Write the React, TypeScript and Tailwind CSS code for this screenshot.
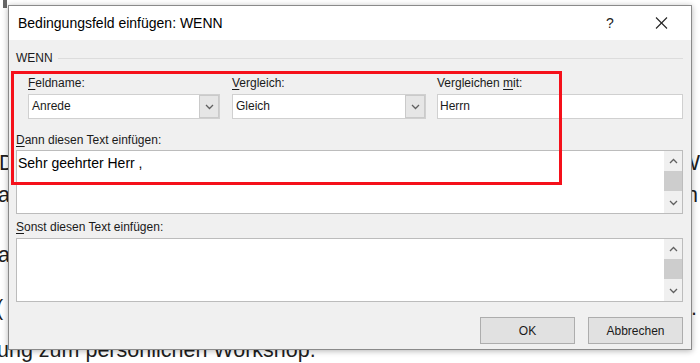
import React from 'react';

const Chevron: React.FC<{ up?: boolean; className?: string }> = ({ up, className }) => (
  <svg width="9" height="6" viewBox="0 0 9 6" className={className}>
    <polyline
      points={up ? '1,5 4.5,1.5 8,5' : '1,1 4.5,4.5 8,1'}
      fill="none"
      stroke="#606060"
      strokeWidth="1.3"
    />
  </svg>
);

const Label: React.FC<{ k: string; rest: string; pre?: string }> = ({ k, rest, pre }) => (
  <div className="h-[16px] leading-[16px] text-[12px] text-[#1a1a1a]">
    {pre}
    <span className="underline underline-offset-2">{k}</span>
    {rest}
  </div>
);

const Combo: React.FC<{ value: string; width: string }> = ({ value, width }) => (
  <div className={`flex h-[25px] ${width} border border-[#d0d0d0] bg-white`}>
    <span className="flex-1 pl-[3px] text-[12px] leading-[23px] text-[#1a1a1a]">{value}</span>
    <div className="flex w-[20px] items-center justify-center border border-[#cacaca] bg-[#e6e6e6]">
      <Chevron />
    </div>
  </div>
);

const TextBox: React.FC<{ text?: string }> = ({ text }) => (
  <div className="flex h-[64px] border border-[#bcbcbc] bg-white">
    <div className="flex-1 pl-[1px] pt-[2px] text-[14px] leading-[20px] text-black">{text}</div>
    <div className="flex w-[18px] flex-col bg-[#f0f0f0]">
      <div className="flex h-[20px] items-center justify-center">
        <Chevron up />
      </div>
      <div className="h-[20px] bg-[#cdcdcd]" />
      <div className="flex-1" />
      <div className="flex h-[20px] items-center justify-center">
        <Chevron />
      </div>
    </div>
  </div>
);

export default function App() {
  return (
    <div
      className="relative h-[363px] w-[700px] overflow-hidden bg-white"
      style={{ fontFamily: '"Liberation Sans", Arial, sans-serif' }}
    >
      {/* Document behind the dialog */}
      <div className="flex flex-col text-[21.5px] text-[#1e1e1e]">
        <div className="ml-[3px] h-[8px] w-[4px] bg-[#666]" />
        <div className="mt-[139px] flex h-[32px] items-center justify-between whitespace-nowrap leading-[32px]">
          <span className="-ml-[1px]">D</span>
          <span>W</span>
        </div>
        <div className="flex h-[32px] items-center justify-between whitespace-nowrap pr-[2px] leading-[32px]">
          <span className="-ml-[2px]">a</span>
          <span>h</span>
        </div>
        <div className="mt-[28px] flex h-[32px] items-center whitespace-nowrap leading-[32px]">
          <span className="-ml-[2px]">a</span>
        </div>
        <div className="mt-[21px] flex h-[32px] items-center justify-between whitespace-nowrap pr-[3px] leading-[32px]">
          <span className="-ml-[4px]">(</span>
          <span>.</span>
        </div>
        <div className="mt-[10px] h-[32px] whitespace-nowrap leading-[32px]">
          <span className="-ml-[3px] inline-block">ung zum persönlichen Workshop.</span>
        </div>
      </div>

      {/* Dialog */}
      <div className="absolute left-[8px] top-[5px] flex h-[345px] w-[684px] flex-col border border-[#8a8a8a] bg-[#f0f0f0] shadow-[0_1px_6px_rgba(0,0,0,0.3)]">
        <div className="flex h-[34px] items-center justify-between bg-white pl-[9px] pr-[19px]">
          <span className="text-[14px] text-black">Bedingungsfeld einfügen: WENN</span>
          <div className="flex items-center gap-[32px]">
            <span className="w-[20px] text-center text-[14px] text-[#222]">?</span>
            <svg width="20" height="12" viewBox="0 0 20 12">
              <line x1="4" y1="0.5" x2="15" y2="11.5" stroke="#222" strokeWidth="1.1" />
              <line x1="15" y1="0.5" x2="4" y2="11.5" stroke="#222" strokeWidth="1.1" />
            </svg>
          </div>
        </div>

        <div className="flex flex-1 flex-col pl-[7px] pr-[8px]">
          <div className="mt-[10px] flex h-[16px] items-center">
            <span className="text-[12px] text-[#1a1a1a]">WENN</span>
            <div className="ml-[5px] h-px flex-1 bg-[#dcdcdc]" />
          </div>

          <div className="mt-[9px] flex pl-[12px]">
            <div className="w-[192px]">
              <Label k="F" rest="eldname:" />
              <div className="mt-[3px]">
                <Combo value="Anrede" width="w-[192px]" />
              </div>
            </div>
            <div className="ml-[12px] w-[194px]">
              <Label k="V" rest="ergleich:" />
              <div className="mt-[3px]">
                <Combo value="Gleich" width="w-[194px]" />
              </div>
            </div>
            <div className="ml-[11px] flex-1">
              <Label pre="Vergleichen " k="m" rest="it:" />
              <div className="mt-[3px] h-[25px] border border-[#d0d0d0] bg-white pl-[2px] text-[12px] leading-[23px] text-[#1a1a1a]">
                Herrn
              </div>
            </div>
          </div>

          <div className="mt-[13px]">
            <Label k="D" rest="ann diesen Text einfügen:" />
          </div>
          <div className="mt-[2px]">
            <TextBox text="Sehr geehrter Herr ," />
          </div>

          <div className="mt-[5px]">
            <Label k="S" rest="onst diesen Text einfügen:" />
          </div>
          <div className="mt-[3px]">
            <TextBox />
          </div>

          <div className="mt-[15px] flex justify-end gap-[13px]">
            <button className="h-[27px] w-[95px] border border-[#adadad] bg-[#e1e1e1] text-[12px] text-[#1a1a1a]">
              OK
            </button>
            <button className="h-[27px] w-[95px] border border-[#adadad] bg-[#e1e1e1] text-[12px] text-[#1a1a1a]">
              Abbrechen
            </button>
          </div>
        </div>

        {/* Red annotation frame */}
        <div className="absolute left-[2px] top-[65px] h-[114px] w-[551px] border-[3px] border-[#f5101a]" />
      </div>
    </div>
  );
}
